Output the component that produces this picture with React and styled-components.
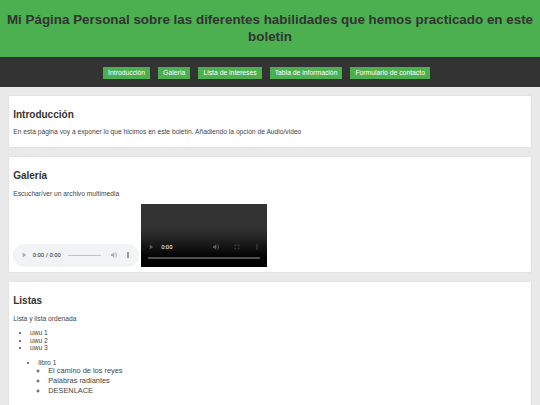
import styled, { createGlobalStyle } from "styled-components";

const GlobalStyle = createGlobalStyle`
  body {
    margin: 0;
    background: #e9e9e9;
    font-family: "Liberation Sans", Arial, sans-serif;
    color: #333;
  }
`;

const Header = styled.header`
  background: #4caf50;
  padding: 12px 0;
  text-align: center;

  h1 {
    margin: 0;
    font-size: 13.4px;
    line-height: 16.5px;
    color: #333;
  }
`;

const Nav = styled.nav`
  background: #333;
  height: 30px;
  padding-right: 7px;
  display: flex;
  justify-content: center;
  align-items: center;
  gap: 8px;
`;

const NavLink = styled.a`
  background: #4caf50;
  color: #fff;
  font-size: 6.8px;
  line-height: 8px;
  padding: 2px 5px;
  margin-top: 1px;
  text-decoration: none;
`;

const Main = styled.main`
  padding: 9px;
  display: flex;
  flex-direction: column;
  gap: 10px;
`;

const Section = styled.section`
  background: #fff;
  padding: 4.2px;
  box-shadow: 0 0 2px rgba(0, 0, 0, 0.08);

  h2 {
    font-size: 10px;
    line-height: 11.5px;
    margin: 8.4px 0;
    color: #333;
  }

  p {
    font-size: 6.7px;
    line-height: 7.7px;
    margin: 6.7px 0;
    color: #444;
  }
`;

const Media = styled.div`
  font-size: 6.7px;

  audio,
  video {
    zoom: 0.42;
  }
`;

const List = styled.ul`
  margin: ${(p) => p.$top || "6.7px"} 0 6.7px;
  padding-left: ${(p) => p.$indent};
  font-size: 6.7px;
  line-height: 7.7px;
  color: #444;
`;

const SubList = styled.ul`
  margin: 0;
  padding-left: 10px;
  list-style-type: circle;
  font-size: 7.4px;

  li {
    line-height: 10px;
  }
`;

const links = [
  "Introducción",
  "Galería",
  "Lista de intereses",
  "Tabla de información",
  "Formulario de contacto",
];

export default function App() {
  return (
    <>
      <GlobalStyle />
      <Header>
        <h1>
          Mi Página Personal sobre las diferentes habilidades que hemos
          practicado en este boletin
        </h1>
      </Header>
      <Nav>
        {links.map((l) => (
          <NavLink key={l} href="#">
            {l}
          </NavLink>
        ))}
      </Nav>
      <Main>
        <Section>
          <h2>Introducción</h2>
          <p>
            En esta página voy a exponer lo que hicimos en este boletin.
            Añadiendo la opcion de Audio/video
          </p>
        </Section>
        <Section>
          <h2>Galería</h2>
          <p>Escuchar/ver un archivo multimedia</p>
          <Media>
            <audio controls /> <video controls width="300" height="150" />
          </Media>
        </Section>
        <Section>
          <h2>Listas</h2>
          <p>Lista y lista ordenada</p>
          <List $indent="16.8px">
            <li>uwu 1</li>
            <li>uwu 2</li>
            <li>uwu 3</li>
          </List>
          <List $indent="25px" $top="5px">
            <li>
              libro 1
              <SubList>
                <li>El camino de los reyes</li>
                <li>Palabras radiantes</li>
                <li>DESENLACE</li>
              </SubList>
            </li>
          </List>
        </Section>
      </Main>
    </>
  );
}
